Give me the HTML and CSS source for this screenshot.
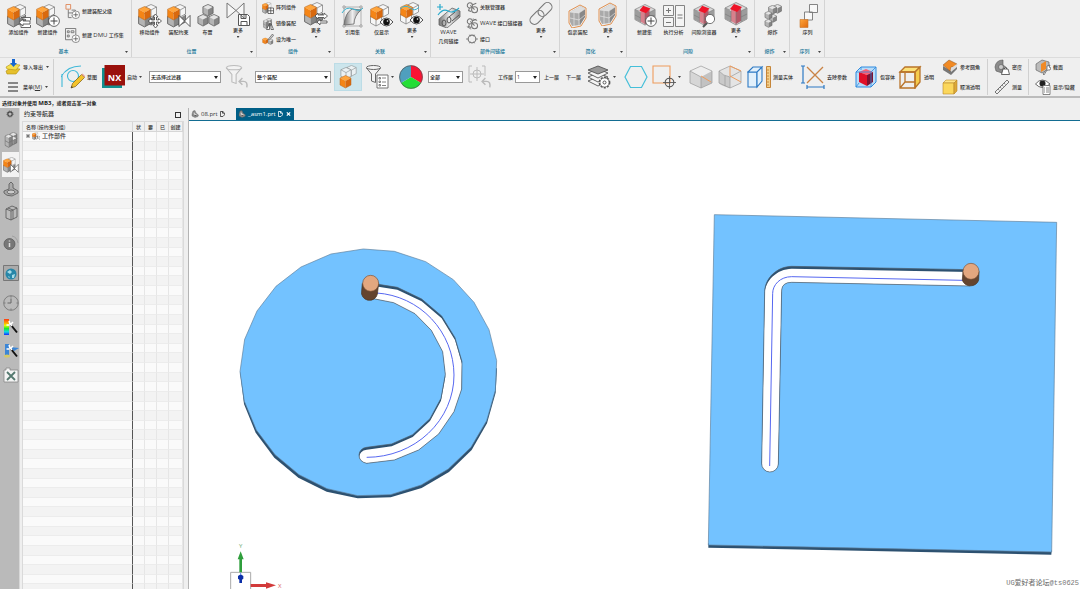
FILE: index.html
```html
<!DOCTYPE html>
<html lang="zh-CN">
<head>
<meta charset="utf-8">
<title>_asm1.prt - NX</title>
<link rel="stylesheet" href="styles.css">
</head>
<body>
<svg class="defs" aria-hidden="true">
  <defs>
    <linearGradient id="orange" x2="1" y2="1"><stop offset="0" stop-color="#ffa53a"/><stop offset="1" stop-color="#e0690c"/></linearGradient>
    <linearGradient id="metal" x2="1"><stop offset="0" stop-color="#777"/><stop offset=".5" stop-color="#eee"/><stop offset="1" stop-color="#888"/></linearGradient>
    <linearGradient id="rainbow" x2="0" y2="1"><stop offset="0" stop-color="#ff3a10"/><stop offset=".25" stop-color="#ffa800"/><stop offset=".4" stop-color="#e8ff00"/><stop offset=".6" stop-color="#18e830"/><stop offset=".8" stop-color="#10d8e8"/><stop offset="1" stop-color="#1828ff"/></linearGradient>
    <symbol id="cg" viewBox="0 0 12 14"><path fill="#e4e4e4" d="M6 .5 11.5 3 6 6 .5 3z"/><path fill="#b4b4b4" d="M.5 3 6 6v7L.5 10z"/><path fill="#858585" d="M11.500 3 6 6v7l5.500-3z"/><path fill="none" stroke="#5c5c5c" stroke-width=".8" d="M6 .5 11.500 3v7L6 13 .5 10V3z"/></symbol>
    <symbol id="cw" viewBox="0 0 12 14"><path fill="#f6f6f6" d="M6 .5 11.500 3v7L6 13 .5 10V3z"/><path fill="none" stroke="#777" stroke-width=".7" d="M6 .5 11.500 3v7L6 13 .5 10V3zM.5 3 6 6l5.500-3M6 6v7"/></symbol>
    <symbol id="co" viewBox="0 0 12 14"><path fill="#ffa53c" d="M6 .5 11.500 3 6 6 .5 3z"/><path fill="#f58516" d="M.5 3 6 6v7L.5 10z"/><path fill="#d9690e" d="M11.500 3 6 6v7l5.500-3z"/><path fill="none" stroke="#b8651c" stroke-width=".5" d="M6 .5 11.500 3v7L6 13 .5 10V3z"/></symbol>
    <symbol id="asm" viewBox="0 0 24 24"><use href="#cg" x="7" y="8" width="12" height="14"/><use href="#cg" x="0" y="9" width="13" height="15"/><use href="#cw" x="7" y="0" width="12" height="14"/><use href="#co" x="0" y="2" width="13" height="15"/></symbol>
    <symbol id="asmg" viewBox="0 0 24 24"><use href="#cg" x="9" y="0" width="13" height="14"/><use href="#cg" x="9" y="6" width="13" height="14"/><use href="#cg" x="2" y="10" width="13" height="14"/><use href="#cg" x="2" y="3" width="13" height="14"/></symbol>
    <symbol id="asmw" viewBox="0 0 24 24"><use href="#cw" x="7" y="0" width="12" height="14"/><use href="#cw" x="0" y="9" width="12" height="14"/><use href="#co" x="0" y="2" width="13" height="15"/></symbol>
    <symbol id="eye" viewBox="0 0 14 10"><path fill="#fff" stroke="#222" stroke-width=".8" d="M.5 5Q7-3 13.500 5 7 13 .5 5z"/><circle cx="7" cy="5" r="3.300" fill="#111"/><circle cx="8" cy="4" r=".8" fill="#fff"/></symbol>
    <symbol id="plus" viewBox="0 0 12 12"><circle cx="6" cy="6" r="5.400" fill="#fff" stroke="#444" stroke-width=".8"/><path stroke="#444" d="M6 2.500v7M2.500 6h7"/></symbol>
    <symbol id="bow" viewBox="0 0 14 14"><path fill="#fff" stroke="#444" stroke-width=".9" d="M1 1v12l6-6zM13 1v12L7 7z"/></symbol>
    <symbol id="redcube" viewBox="0 0 24 24"><path fill="#d8d8d8" stroke="#888" stroke-width=".8" d="M12 .5 23 6v11l-11 6L1 17V6z"/><path fill="#9c9c9c" d="M1 6l6 3v11l-6-3zM23 6l-6 3v11l6-3z"/><path fill="#d8808c" d="M7 6l5 3v13l-5-3z"/><path fill="#b65767" d="M17 6l-5 3v13l5-3z"/><path fill="#ee1428" d="M10 2l8 3-5 5-7-3z"/><path fill="none" stroke="#777" stroke-width=".6" d="M1 6l5 2M23 6l-6 3M12 10v13M1 12l6 3M23 12l-6 3M7 9v11M17 9v11"/></symbol>
    <symbol id="eyes" viewBox="0 0 24 24"><path fill="none" stroke="#e09050" stroke-width="1" d="M3 7 14 1l6 3v10l-5 8-9 2-3-5z"/><path fill="#aaa" d="M4 8 15 2l4 3v8l-5 8-8 1-2-4z"/><path fill="#ddd" d="M4 8 15 2l4 3-6 4z"/><path fill="#888" d="M13 9l6-4v8l-5 8z"/><path stroke="#eee" stroke-width=".6" fill="none" d="M4 14l9 2 6-5M8 9v13M13 9v12M4 8l9 1 6-4"/></symbol>
    <symbol id="link" viewBox="0 0 14 14"><g fill="none" stroke="#777" stroke-width="1.200"><circle cx="4.500" cy="4" r="3"/><circle cx="10" cy="9" r="3.500"/><path d="M7 3.500l5-2M4 7l-1 3 3 1M5 4l5 5"/></g></symbol>
    <symbol id="bracket" viewBox="0 0 16 16"><path fill="#8c8c8c" stroke="#555" stroke-width=".7" d="M2 8 4 2l4-1 2 5 5 4-1 3-6 2-6-3z"/><path fill="#ddd" stroke="#666" stroke-width=".5" d="M5 8l1-5 2 4 5 3-4 2z"/><ellipse cx="9" cy="11" rx="2" ry="1" fill="#555"/></symbol>
    <symbol id="undo" viewBox="0 0 10 10"><path fill="none" stroke="#bbb" stroke-width="1.300" d="M4 1 1 4l3 3M1 4h4q4 0 3 5.500"/></symbol>
    <symbol id="funnel" viewBox="0 0 16 18"><path fill="#f3f3f3" stroke-width="1" d="M1 3l5 6v7l4 1.500V9l5-6z"/><ellipse cx="8" cy="2.500" rx="7" ry="2" fill="#f3f3f3"/></symbol>
    <symbol id="target" viewBox="0 0 12 12"><g fill="none" stroke="#555"><circle cx="6" cy="6" r="4"/><path d="M6 0v12M0 6h12" stroke-width=".8"/></g></symbol>
    <symbol id="doc" viewBox="0 0 6 7"><path fill="none" stroke="currentColor" d="M.5.5h3l2 2v2l-2 2h-3zM3 .5v2h2"/></symbol>
    <symbol id="wand" viewBox="0 0 14 14"><path stroke="#111" stroke-width="2" d="M6 5l6 7.500"/><path stroke="#fff" stroke-width="1.500" d="M5 3.500l2 2.500M4 1l1 3M8 2 5.500 4.500M1.500 5l3 0"/></symbol>
  </defs>
</svg>

<header class="ribbon">
  <section class="group">
    <div class="tools">
      <button class="tool"><svg viewBox="0 0 24 24"><use href="#asm" width="24" height="24"/><path fill="#fff" stroke="#444" stroke-width=".8" d="M14 13.500h9.500v3M23.500 21v2.500H14v-3"/><path fill="#fff" stroke="#444" stroke-width=".8" d="M12 18.500l4-3.500v2h7v3h-7v2z"/></svg><span>添加组件</span></button>
      <button class="tool"><svg viewBox="0 0 24 24"><use href="#asm" width="24" height="24"/><use href="#plus" x="12" y="11" width="12" height="12"/></svg><span>新建组件</span></button>
      <div class="stack stack-two">
        <button class="row-tool"><svg class="mid" viewBox="0 0 16 16"><path fill="none" stroke="#e08a5c" d="M1 .5h5v5H1z"/><path fill="none" stroke="#777" d="M3.500 6v8.500H7M3.500 9.500H8M7 6.500h4v5M7 12.500h3"/><use href="#plus" x="7" y="7" width="9" height="9"/></svg><span>新建装配父级</span></button>
        <button class="row-tool"><svg class="mid" viewBox="0 0 16 16"><path fill="none" stroke="#777" d="M.5.500h11v12H.5zM2.500 3h2v2h-2zM6.500 3h3v2h-3zM2.500 7.500h2v2h-2z"/><use href="#plus" x="7" y="7" width="9" height="9"/></svg><span>新建 <span class="lat">DMU</span> 工作集</span></button>
      </div>
    </div>
    <h2 class="caption">基本<i class="caret"></i></h2>
  </section>
  <section class="group">
    <div class="tools">
      <button class="tool"><svg viewBox="0 0 24 24"><use href="#asm" width="24" height="24"/><path fill="#fff" stroke="#444" stroke-width=".8" d="M17.500 10l2.500 3h-1.500v3h2v-1.500L23.500 17l-3 2.500V18h-2v3H20l-2.500 3-2.500-3h1.500v-3h-3v1.500L10 17l3.500-2.500V16h3v-3H15z"/></svg><span>移动组件</span></button>
      <button class="tool"><svg viewBox="0 0 24 24"><use href="#asm" width="24" height="24"/><use href="#bow" x="11" y="10" width="13" height="14"/></svg><span>装配约束</span></button>
      <button class="tool"><svg viewBox="0 0 24 24"><use href="#cg" x="6" y="0" width="12" height="13"/><use href="#cg" x="1" y="10" width="12" height="13"/><use href="#cg" x="12" y="10" width="12" height="13"/></svg><span>布置</span></button>
      <button class="tool more"><svg viewBox="0 0 24 24"><path fill="#f6f6f6" stroke="#777" d="M1 1v15l9-7.500zM18 1v15l-8-7.500z"/><path fill="#fff" stroke="#555" d="M12.500 12.500h9l2 2v9h-11zM15 12.500v4h5v-4M15 23.500v-4h6v4"/></svg><span>更多</span><i class="caret"></i></button>
    </div>
    <h2 class="caption">位置<i class="caret"></i></h2>
  </section>
  <section class="group">
    <div class="tools">
      <div class="stack stack-short">
        <button class="row-tool"><svg viewBox="0 0 24 24"><use href="#asm" width="24" height="24"/><path fill="#fff" stroke="#444" stroke-width="1.500" d="M12 12h11v11H12zM17.500 12v11M12 17.500h11"/></svg><span>阵列组件</span></button>
        <button class="row-tool"><svg viewBox="0 0 24 24"><use href="#asmg" width="22" height="22"/><path fill="#fff" stroke="#444" stroke-width="1.500" d="M9 23l6-12v12zM23 23l-5-12v12z"/></svg><span>镜像装配</span></button>
        <button class="row-tool"><svg viewBox="0 0 24 24"><use href="#co" x="0" y="9" width="13" height="14"/><use href="#cg" x="11" y="11" width="12" height="13"/><path fill="#ccc" stroke="#666" stroke-width="1.500" d="M12 13l9-11 2 3-8 9z"/></svg><span>设为唯一</span></button>
      </div>
      <button class="tool more"><svg viewBox="0 0 24 24"><use href="#asm" width="24" height="24"/><path fill="#fff" stroke="#444" stroke-width=".8" d="M11 14l3-3v2h6v-2l3.500 3-3.500 3v-1.500h-6V17zM13 20l3-2.500V19h7v2h-7v2z"/></svg><span>更多</span><i class="caret"></i></button>
    </div>
    <h2 class="caption">组件<i class="caret"></i></h2>
  </section>
  <section class="group">
    <div class="tools">
      <button class="tool"><svg viewBox="0 0 24 24"><path fill="none" stroke="#999" stroke-width=".7" d="M3 3h17v19H3z"/><path fill="url(#metal)" stroke="#666" stroke-width=".8" d="M3 21Q4 9 11 5l9 1q-7 6-7 14z"/><path fill="none" stroke="#3ab3cf" d="M1 9Q5 2 12 5t10-1"/><path fill="#fff" stroke="#777" stroke-width=".6" d="M2 2h2v2H2zM19 2h2v2h-2zM2 21h2v2H2zM19 21h2v2h-2z"/></svg><span>引用集</span></button>
      <button class="tool"><svg viewBox="0 0 24 24"><use href="#asmw" width="24" height="24"/><use href="#eye" x="9" y="13" width="15" height="10"/></svg><span>仅显示</span></button>
      <button class="tool more"><svg viewBox="0 0 24 24"><use href="#asmw" width="24" height="24"/><path fill="none" stroke="#3ab3cf" d="M0 7q5-5 10-1t9-1"/><use href="#eye" x="9" y="13" width="15" height="10"/></svg><span>更多</span><i class="caret"></i></button>
    </div>
    <h2 class="caption">关联<i class="caret"></i></h2>
  </section>
  <section class="group">
    <div class="tools">
      <button class="tool"><svg viewBox="0 0 24 24"><path fill="url(#metal)" stroke="#666" stroke-width=".8" d="M2 15 15 4l8 3v6L10 24l-8-3z"/><g fill="none" stroke="#555"><ellipse cx="7" cy="19" rx="2" ry="3"/><ellipse cx="12" cy="16" rx="2" ry="3"/><path d="M12 13l6-5M15 17l7-6"/></g><path fill="none" stroke="#27a9cc" stroke-width="1.200" d="M3 0v6M0 3h6M1 11q5-7 10-4t11-3"/></svg><span><span class="lat">WAVE</span><br>几何链接</span></button>
      <div class="stack stack-long">
        <button class="row-tool"><svg viewBox="0 0 14 14"><use href="#link" width="14" height="14"/></svg><span>关联管理器</span></button>
        <button class="row-tool"><svg viewBox="0 0 14 14"><use href="#link" width="14" height="14"/><path stroke="#777" d="M1 10l5 3M8 1l5 2"/></svg><span><span class="lat">WAVE</span> 接口链接器</span></button>
        <button class="row-tool"><svg viewBox="0 0 14 14"><circle cx="7" cy="7" r="4.500" fill="none" stroke="#777" stroke-width="1.300"/><path stroke="#777" d="M0 7h3M11 7h3M4 2l1 2M10 2 9 4M4 12l1-2M10 12l-1-2"/></svg><span>接口</span></button>
      </div>
      <button class="tool more"><svg viewBox="0 0 24 24"><g fill="none" stroke="#777" stroke-width="1.100"><rect x="8" y="3" width="16" height="9" rx="4.500" transform="rotate(-45 16 7.500)"/><rect x="0" y="11" width="16" height="9" rx="4.500" transform="rotate(-45 8 15.500)"/></g></svg><span>更多</span><i class="caret"></i></button>
    </div>
    <h2 class="caption">部件间链接<i class="caret"></i></h2>
  </section>
  <section class="group">
    <div class="tools">
      <button class="tool"><svg viewBox="0 0 24 24"><use href="#eyes" width="24" height="24"/></svg><span>包裹装配</span></button>
      <button class="tool more"><svg viewBox="0 0 24 24"><use href="#eyes" width="24" height="24"/></svg><span>更多</span><i class="caret"></i></button>
    </div>
    <h2 class="caption">简化<i class="caret"></i></h2>
  </section>
  <section class="group">
    <div class="tools">
      <button class="tool"><svg viewBox="0 0 24 24"><use href="#redcube" width="24" height="22"/><use href="#plus" x="12" y="11" width="12" height="12"/></svg><span>新建集</span></button>
      <button class="tool"><svg viewBox="0 0 24 24"><path fill="#f4f4f4" stroke="#777" stroke-width=".9" d="M1.500 1.500h10v10h-10zM1.500 13.500h10v9h-10zM13.500 1.500h9v21h-9z"/><path stroke="#777" d="M4 6.500h5M6.500 4v5M4 18.500h5M15.500 11h5M15.500 14h5"/></svg><span>执行分析</span></button>
      <button class="tool wide"><svg viewBox="0 0 24 24"><use href="#redcube" width="24" height="22"/><path stroke="#555" stroke-width="2" d="M15 19l-4 4"/><circle cx="18" cy="15" r="4.600" fill="#fff" stroke="#555" stroke-width=".8"/></svg><span>间隙浏览器</span></button>
      <button class="tool more"><svg viewBox="0 0 24 24"><use href="#redcube" width="24" height="24"/></svg><span>更多</span><i class="caret"></i></button>
    </div>
    <h2 class="caption">间隙<i class="caret"></i></h2>
  </section>
  <section class="group">
    <div class="tools">
      <button class="tool"><svg viewBox="0 0 24 24"><use href="#cg" x="12" y="0" width="9" height="10"/><use href="#cg" x="7" y="1" width="9" height="10"/><use href="#cg" x="8" y="10" width="8" height="9"/><use href="#cg" x="3" y="7" width="9" height="9"/><use href="#cg" x="3" y="15" width="9" height="9"/></svg><span>爆炸</span></button>
    </div>
    <h2 class="caption">爆炸<i class="caret"></i></h2>
  </section>
  <section class="group">
    <div class="tools">
      <button class="tool"><svg viewBox="0 0 24 24"><path fill="#f8f8f8" stroke="#777" stroke-width=".9" d="M8.500 8h8v8h-8zM13.500.500h8v8h-8z"/><path fill="url(#orange)" stroke="#c8762e" stroke-width=".6" d="M4 15.500h8v8H4z"/></svg><span>序列</span></button>
    </div>
    <h2 class="caption">序列<i class="caret"></i></h2>
  </section>
</header>

<nav class="bar">
  <div class="pair first">
    <button class="row-tool"><svg class="mid" viewBox="0 0 16 16"><path fill="#e6c02c" stroke="#b08f10" stroke-width=".6" d="M1 12l5-3 9 1-4 5-9 0z"/><path fill="#f5e04e" stroke="#b08f10" stroke-width=".6" d="M1 8l5-3 9 1-4 5-9-1z"/><path fill="#1767d0" d="M7 0h3v4h2L8.500 8 5 4h2z"/></svg><span>导入导出</span><i class="caret"></i></button>
    <button class="row-tool"><svg class="mid" viewBox="0 0 16 16"><path stroke="#666" stroke-width="1.300" d="M3 4h10M3 8h10M3 12h10"/></svg><span>菜单<span class="lat">(<u>M</u>)</span></span><i class="caret"></i></button>
  </div>
  <button class="cell lead"><svg viewBox="0 0 24 24"><g fill="none" stroke="#3fb8d8" stroke-width="1.100"><path d="M1 22V9M0 12Q6 1 20 1"/><circle cx="12" cy="11" r="5.500"/></g><path fill="#f3c32a" stroke="#7b5a12" stroke-width=".7" d="M10 23l1.500-4.500 9-9 3 3-9 9z"/><path fill="#e8a090" d="M20.500 9.500l1-1 3 3-1 1z"/><path fill="#333" d="M10 23l.7-2 1.300 1.300z"/></svg><span>草图</span></button>
  <button class="cell"><svg viewBox="0 0 24 24"><path fill="#119090" d="M1 3h20v20H1z"/><path fill="#9a110c" d="M3.500 0H24v20.500H3.500z"/><text class="nx" x="13.500" y="16">NX</text></svg><span>启动</span><i class="caret"></i></button>
  <label class="combo combo-a"><select aria-label="选择过滤器"><option>无选择过滤器</option></select></label>
  <button class="cell" aria-label="重置过滤器"><svg viewBox="0 0 24 24"><g stroke="#bbb"><use href="#funnel" x="0" y="0" width="18" height="19"/></g><use href="#undo" x="13" y="12" width="11" height="11"/></svg></button>
  <label class="combo combo-b"><select aria-label="选择范围"><option>整个装配</option></select></label>
  <button class="cell on" aria-label="选择组件"><svg viewBox="0 0 24 24"><g opacity=".75"><use href="#cw" x="10" y="0" width="11" height="12"/><use href="#cw" x="4" y="2" width="12" height="13"/></g><use href="#co" x="3" y="10" width="13" height="14"/></svg></button>
  <button class="cell" aria-label="常规选择过滤器"><svg viewBox="0 0 24 24"><g stroke="#666"><use href="#funnel" x="0" y="0" width="17" height="18"/></g><path fill="#fff" stroke="#666" stroke-width=".9" d="M12 10h11v13H12z"/><path fill="none" stroke="#666" stroke-width=".8" d="M14 12.500h1.500v1.500H14zM14 16h1.500v1.500H14zM14 19.500h1.500V21H14zM17 13h4M17 17h4M17 20.500h4"/></svg><i class="caret"></i></button>
  <button class="cell" aria-label="颜色过滤器"><svg viewBox="0 0 24 24"><path fill="#fa1434" d="M12 12V.5A11.500 11.500 0 0 1 22 18z"/><path fill="#23de35" d="M12 12l10 6a11.500 11.500 0 0 1-20 0z"/><path fill="#4f9fbe" d="M12 12 2 18A11.500 11.500 0 0 1 12 .5z"/><circle cx="12" cy="12" r="11.400" fill="none" stroke="#555" stroke-width=".7"/></svg></button>
  <label class="combo combo-c"><select aria-label="图层过滤器"><option>全部</option></select></label>
  <button class="cell" aria-label="捕捉点"><svg viewBox="0 0 24 24"><g fill="none" stroke="#bbb"><path d="M4 1H1v16h3M14 1h3v10"/><circle cx="9" cy="9" r="4"/><path d="M9 2v14M2 9h14"/></g><use href="#undo" x="13" y="12" width="11" height="11"/></svg></button>
  <label class="combo combo-d"><span>工作层</span><select><option>1</option></select></label>
  <button class="cell"><span>上一层</span></button>
  <button class="cell"><span>下一层</span></button>
  <button class="cell" aria-label="图层设置"><svg viewBox="0 0 24 24"><g fill="#f5f5f5" stroke="#555" stroke-width=".9"><path d="M1 16l10-4 10 4-10 5z"/><path d="M1 12l10-4 10 4-10 5z"/><path d="M1 8l10-4 10 4-10 5z"/><path fill="#999" d="M1 5l10-4 10 4-10 4z"/></g><circle cx="17.500" cy="17.500" r="5" fill="#fff" stroke="#555" stroke-width="1.800" stroke-dasharray="2 1.200"/><circle cx="17.500" cy="17.500" r="4.500" fill="#fff" stroke="#555" stroke-width=".7"/><circle cx="17.500" cy="17.500" r="1.500" fill="none" stroke="#555"/></svg><i class="caret"></i></button>
  <button class="cell" aria-label="多边形"><svg viewBox="0 0 24 24"><path fill="none" stroke="#45bfd9" stroke-width="1.200" d="M1 12 6.500 1.500h11L23 12l-5.500 10.500h-11z"/></svg></button>
  <button class="cell" aria-label="矩形选择"><svg viewBox="0 0 24 24"><path fill="none" stroke="#ee9c5c" stroke-width="1.100" d="M1 1h17v17H1z"/><use href="#target" x="11" y="11" width="13" height="13"/></svg><i class="caret"></i></button>
  <button class="cell" aria-label="编辑对象"><svg viewBox="0 0 24 24"><path fill="#eee" d="M12 1 23 6 12 12 1 6z"/><path fill="#d6d6d6" d="M1 6l11 6v11L1 18z"/><path fill="#c2c2c2" d="M23 6l-11 6v11l11-5z"/><path fill="none" stroke="#999" stroke-width=".7" d="M12 1 23 6v12l-11 5-11-5V6zM1 6l11 6M12 23V12"/><path stroke="#ee9c5c" d="M12 11l10 6"/></svg></button>
  <button class="cell" aria-label="剖切对象"><svg viewBox="0 0 24 24"><path fill="#e4e4e4" d="M12 1 23 6v12l-11 5-11-5V6z"/><path fill="#c9c9c9" d="M1 6q4 5 11 6v11Q3 21 1 18z"/><path fill="none" stroke="#999" stroke-width=".7" d="M12 1 23 6v12l-11 5-11-5V6zM1 6q4 5 11 6l11-6M7 11v10M12 12v11"/><path fill="none" stroke="#ee9c5c" d="M23 6 12 1v10l11 6"/></svg></button>
  <button class="cell"><svg viewBox="0 0 24 24"><g fill="#e2f0fb" stroke="#2c79c4" stroke-width="1.100"><path d="M1 7h9v15H1z"/><path d="M1 7l5-5h9l-5 5zM10 7l5-5v14l-5 6z"/></g><path fill="#f3cf8a" stroke="#c07a2a" stroke-width=".9" d="M19.500 1.500h4v21h-4z"/><path stroke="#c07a2a" stroke-width=".8" d="M20 5h2M20 8h2M20 11h2M20 14h2M20 17h2M20 20h2"/></svg><span>测量实体</span></button>
  <button class="cell"><svg viewBox="0 0 24 24"><g fill="none" stroke="#2c79c4" stroke-width="1.200"><path d="M0 1h4M0 18h4M2 1v17M6 20v4M23 20v4M6 22h17"/></g><path stroke="#c98345" stroke-width="1.300" d="M6 2l16 16M22 2 6 18"/></svg><span>去除参数</span></button>
  <button class="cell"><svg viewBox="0 0 24 24"><path fill="#b9dcf8" stroke="#2f8be0" d="M2 7l5-5h15v15l-5 5H2z"/><path fill="#ff6070" d="M12 4l7 3-6 3-8-3z"/><path fill="#e01028" d="M5 7l8 3v11l-8-4z"/><path fill="#7e1230" d="M19 7l-6 3v11l6-4z"/><path fill="none" stroke="#2f8be0" stroke-width=".8" d="M2 7h15v15M17 7l5-5M7 2v3M2 22l3-4"/></svg><span>包容体</span></button>
  <button class="cell"><svg viewBox="0 0 24 24"><path fill="#fce178" stroke="#b9742a" stroke-width="1.300" d="M2 7l5-5h15l-5 5z"/><path fill="#f5cc4c" stroke="#b9742a" stroke-width="1.300" d="M17 7l5-5v15l-5 6z"/><path fill="none" stroke="#b9742a" stroke-width="1.300" d="M2 7h15v16H2zM7 8v9h10M7 17l-5 6"/></svg><span>透明</span></button>
  <div class="pair third">
    <button class="row-tool"><svg class="mid" viewBox="0 0 16 16"><path fill="#777" d="M1 7l8 5 6-6v4l-6 6-8-5z"/><path fill="#f08a25" stroke="#875020" stroke-width=".5" d="M1 6l6-5 8 4-2 3-4 0-1 4z"/><path fill="#ddd" d="M9 9l6-4v3l-6 5z"/></svg><span>参考圆角</span></button>
    <button class="row-tool"><svg class="mid" viewBox="0 0 16 16"><path fill="#ffe68a" stroke="#b9862a" stroke-width=".6" d="M1 4l3-3h11l-3 3z"/><path fill="#fbd75c" stroke="#b9862a" stroke-width=".6" d="M1 4h11v11H1z"/><path fill="#dca938" stroke="#b9862a" stroke-width=".6" d="M12 4l3-3v11l-3 3z"/></svg><span>取消透明</span></button>
  </div>
  <div class="pair">
    <button class="row-tool"><svg class="mid" viewBox="0 0 16 16"><path fill="#8c8c8c" stroke="#555" stroke-width=".6" d="M1 8Q2 1 9 1v5l4 3-5 5-6-2z"/><circle cx="7" cy="8" r="2.500" fill="#ccc" stroke="#555" stroke-width=".6"/><path fill="#fff" stroke="#444" stroke-width=".8" d="M9 10h5l1.500 5.500h-8zM10 10q1.500-3 3 0"/></svg><span>密度</span></button>
    <button class="row-tool"><svg class="mid" viewBox="0 0 16 16"><path fill="#eee" stroke="#666" stroke-width=".9" d="M1 13 13 1l2 2L3 15z"/><path stroke="#666" stroke-width=".7" d="M4 10l1.500 1.500M6 8l1.500 1.500M8 6l1.500 1.500M10 4l1.500 1.500"/></svg><span>测量</span></button>
  </div>
  <div class="pair">
    <button class="row-tool"><svg class="mid" viewBox="0 0 16 16"><path fill="#bbb" stroke="#555" stroke-width=".6" d="M1 5l6-4 7 2v7l-7 4-6-3z"/><path fill="#f08a25" d="M6 5l5-3v8l-5 3z"/><path fill="#fff" stroke="#555" stroke-width=".7" d="M8 15l4-5V7l3-1-1 2 2 1-1 2-3 0-3 5z"/></svg><span>截面</span></button>
    <button class="row-tool"><svg class="mid" viewBox="0 0 16 16"><path fill="#fff" stroke="#444" stroke-width=".8" d="M.5 5Q7-3 15 5 7 12 .5 5z"/><circle cx="7.500" cy="4.500" r="3" fill="#222"/><path fill="#fff" stroke="#555" stroke-width=".7" d="M8 6.500h7v9H8z"/><path stroke="#555" stroke-width=".7" d="M9 9h1M11 9h3M9 11h1M11 11h3M9 13h1M11 13h3"/></svg><span>显示/隐藏</span></button>
  </div>
</nav>

<p class="prompt">选择对象并使用 <span class="lat">MB3</span>，或者双击某一对象</p>

<div class="work">
  <nav class="rail" aria-label="资源条">
    <button aria-label="设置"><svg viewBox="0 0 16 16"><circle cx="8" cy="8" r="3.500" fill="none" stroke="#444" stroke-width="1.800"/><circle cx="8" cy="8" r="5" fill="none" stroke="#444" stroke-width="1.200" stroke-dasharray="1.500 2"/></svg></button>
    <button aria-label="装配导航器"><svg viewBox="0 0 24 24"><use href="#asmg" width="24" height="24"/></svg></button>
    <button class="on" aria-label="约束导航器"><svg viewBox="0 0 24 24"><use href="#asm" width="24" height="24"/><use href="#bow" x="10" y="10" width="14" height="14"/></svg></button>
    <button aria-label="部件导航器"><svg viewBox="0 0 16 16"><path fill="#aaa" stroke="#555" stroke-width=".8" d="M1 10l5-2V3l2-2 2 2v4l5 3v2l-6 3q-6 0-8-3z"/><ellipse cx="8" cy="11" rx="4" ry="2" fill="#ccc" stroke="#555" stroke-width=".8"/></svg></button>
    <button aria-label="重用库"><svg viewBox="0 0 16 16"><path fill="#bbb" stroke="#555" stroke-width=".8" d="M3 4l6-3 5 2v9l-6 3-5-2zM3 4l5 2 6-3M8 6v9M5 3l5 2v9"/></svg></button>
    <button class="gap" aria-label="信息"><svg viewBox="0 0 16 16"><circle cx="6.500" cy="9" r="5.500" fill="#777" stroke="#555" stroke-width=".7"/><path stroke="#ddd" stroke-width="1.500" d="M6.500 8v4M6.500 5.500v1"/><path fill="none" stroke="#999" stroke-width=".8" d="M9 1q5 1 6 7"/></svg></button>
    <button class="gap" aria-label="浏览器"><svg viewBox="0 0 16 16"><path fill="#aaa" stroke="#777" d="M.5.500h15v15H.5z"/><circle cx="8" cy="9" r="5.500" fill="#2786a8"/><path fill="#a8dce8" d="M4 7l3-2 2 2-2 2zM9 10l3-1-1 4-2 0zM5 11l2 1-1 1z"/></svg></button>
    <button class="gap" aria-label="历史记录"><svg viewBox="0 0 16 16"><circle cx="8" cy="8" r="7.300" fill="none" stroke="#777" stroke-width=".9"/><path fill="none" stroke="#666" d="M8 3.500V8H4.500"/><path stroke="#777" d="M8 1v1.500M8 13.500V15M1 8h1.500M13.500 8H15"/></svg></button>
    <button aria-label="系统材料"><svg viewBox="0 0 16 16"><path fill="url(#rainbow)" d="M1 0h5v16H1z"/><use href="#wand" x="2" y="1" width="14" height="14"/></svg></button>
    <button aria-label="加工向导"><svg viewBox="0 0 16 16"><path fill="#3c86d6" d="M2 1h4v12H2zM7 4l9 1-5 3z"/><ellipse cx="4" cy="13" rx="3" ry="1.500" fill="#d6c968"/><use href="#wand" x="2" y="1" width="14" height="14"/></svg></button>
    <button aria-label="角色"><svg viewBox="0 0 16 16"><path fill="#f4f4f4" stroke="#888" stroke-width=".8" d="M1 3h2V1h4v2h8v12H1z"/><path stroke="#54796f" stroke-width="1.800" d="M4 5l8 8M12 5l-8 8"/></svg></button>
  </nav>

  <aside class="panel">
    <h1 class="panel-title">约束导航器<button class="pin" aria-label="最大化"></button></h1>
    <div class="list">
      <table>
        <colgroup><col><col class="c-s"><col class="c-s"><col class="c-s"><col class="c-m"></colgroup>
        <thead><tr><th>名称 (按约束分组)</th><th>状</th><th>要</th><th>已</th><th>创建</th></tr></thead>
        <tbody id="rows"><tr><td><span class="node"><i class="expand"></i><svg viewBox="0 0 24 24"><use href="#asm" width="24" height="24"/><use href="#bow" x="11" y="11" width="13" height="13"/></svg>工作部件</span></td><td></td><td></td><td></td><td></td></tr></tbody>
      </table>
    </div>
  </aside>

  <main class="main">
    <div class="tabs">
      <a class="tab" href="#part"><svg class="part" viewBox="0 0 16 16"><use href="#bracket" width="16" height="16"/></svg>08.prt<svg class="doc" viewBox="0 0 6 7"><use href="#doc" width="6" height="7"/></svg></a>
      <a class="tab active" href="#asm1"><svg class="part" viewBox="0 0 16 16"><use href="#bracket" width="16" height="16"/></svg>_asm1.prt<svg class="doc" viewBox="0 0 6 7"><use href="#doc" width="6" height="7"/></svg><svg class="doc close" viewBox="0 0 6 6"><path stroke="currentColor" stroke-width="1.500" d="M1 1l4 4M5 1 1 5"/></svg></a>
    </div>
    <div class="canvas">
      <svg class="scene" viewBox="189 121 891 468" role="img" aria-label="装配模型">
        <defs>
          <path id="slot" d="M440 148 460 148 517 157 590 192 650 243 690 308 711 380 710 462 687 530 641 597 581 645 508 675 425 685Q402 680 402 660 404 640 425 637L500 627 563 599 615 551 648 490 661 418 653 350 619 286 570 236 506 203 440 190z"/>
          <path id="lslot" d="M825 209 290 199C245 200 210 235 209 275L200 790A25 25 0 0 0 250 792L260 270Q262 247 290 247L825 258z"/>
          <clipPath id="slot-clip"><use href="#slot"/></clipPath>
          <clipPath id="lslot-clip"><use href="#lslot"/></clipPath>
        </defs>
        <g transform="translate(225 235) scale(.33333)">
          <path class="edge" d="M45 410 57 507 92 593 148 668 220 728 305 770 398 790 497 787 590 759 672 711 740 645 786 565 812 473 816 400z"/>
          <path class="face" d="M415 42 508 49 602 80 685 134 747 202 792 284 815 377 811 466 785 557 738 637 670 702 589 750 497 779 398 782 306 761 222 719 150 659 94 585 58 499 45 410 59 313 96 228 153 154 228 96 318 57z"/>
          <use href="#slot" class="edge"/>
          <g clip-path="url(#slot-clip)"><use href="#slot" class="hole" y="7"/></g>
          <use href="#slot" class="line"/>
          <path class="curve" d="M455 174A248 248 0 0 1 687 420 262 247 0 0 1 425 667"/>
          <path class="pin-side" d="M412 145 410 168A24 23 0 0 0 457 178L461 145z"/>
          <circle class="pin-top" cx="437" cy="145" r="24"/>
        </g>
        <g transform="translate(695 200) scale(.33333)">
          <path class="edge" d="M40 1030 1070 1050 1069 1064 40 1043z"/>
          <path class="face" d="M58 44 1085 67 1070 1056 40 1035z"/>
          <use href="#lslot" class="edge"/>
          <g clip-path="url(#lslot-clip)"><use href="#lslot" class="hole" y="7"/></g>
          <use href="#lslot" class="line"/>
          <path class="curve" d="M803 241 290 230C255 230 233 255 233 280L224 798"/>
          <path class="pin-side" d="M804 214 802 240A25 22 0 0 0 851 240L852 214z"/>
          <circle class="pin-top" cx="828" cy="214" r="24"/>
        </g>
        <g transform="translate(200 530) scale(.33333)">
          <path fill="none" stroke="#aaa" stroke-width="3" d="M92 190V127h60v63"/>
          <path fill="#2f9e3c" d="M118 127V88h-5l9-24 9 24h-5v39z"/>
          <path fill="#d23a3a" d="M152 162h46v-5l30 9-30 10v-5h-46z"/>
          <path fill="#0c2fa8" d="M114 138l8-5 8 5v8l-4 3v10h-8v-10l-4-3z"/>
          <path stroke="#5a8cf0" stroke-width="3" d="M122 128v6"/>
          <text class="axis-y" x="117" y="54">Y</text>
          <text class="axis-x" x="234" y="173">X</text>
        </g>
      </svg>
      <span class="mark">UG爱好者论坛@ts0625</span>
    </div>
  </main>
</div>
<script src="rows.js"></script>
</body>
</html>
```
FILE: styles.css
```css
* { box-sizing: border-box; }

html, body { height: 100%; }

body {
  margin: 0;
  display: flex;
  flex-direction: column;
  overflow: hidden;
  background: #efefef;
  color: #333;
  font-family: "Open Sans", "Noto Sans CJK SC", sans-serif;
  font-size: 5px;
  font-weight: 500;
  line-height: 9px;
}

button, select {
  margin: 0;
  padding: 0;
  border: 0;
  background: none;
  color: inherit;
  font: inherit;
  white-space: nowrap;
}

h1, h2, p { margin: 0; font-size: inherit; font-weight: 500; }
svg { display: block; flex: none; }
.defs { position: absolute; width: 0; height: 0; }
.lat { font-size: 6px; }

.caret {
  display: block;
  flex: none;
  width: 3px;
  height: 2px;
  background: #444;
  clip-path: polygon(0 0, 100% 0, 50% 100%);
}

/* Ribbon */
.ribbon {
  display: flex;
  flex: none;
  padding-left: 1px;
  border-bottom: 1px solid #dcdcdc;
}

.group {
  display: flex;
  flex-direction: column;
  padding: 0 2px 0 3px;
  border-right: 1px solid #d4d4d4;
}

.tools { display: flex; height: 47px; }

.tool {
  display: flex;
  flex-direction: column;
  align-items: center;
  width: 29px;
  padding-top: 4px;
}

.tool svg { width: 24px; height: 24px; }
.tool span { line-height: 9px; }
.tool .lat { line-height: 8px; }
.tool.more { width: 32px; padding-top: 2px; }
.tool.more .caret { margin-top: 1px; }
.tool.wide { width: 32px; }

.caption {
  position: relative;
  height: 10px;
  color: #187698;
  text-align: center;
  padding-right: 6px;
}

.caption .caret {
  position: absolute;
  right: 1px;
  top: 4px;
}

.stack {
  display: flex;
  flex-direction: column;
  padding: 0 0 0 2px;
}

.stack-two { width: 67px; justify-content: space-around; padding-left: 3px; }
.stack-short { width: 40px; }
.stack-long { width: 62px; padding-left: 3px; }

.row-tool {
  display: flex;
  align-items: center;
  gap: 2px;
  height: 16px;
}

.row-tool svg { width: 12px; height: 12px; }
.row-tool svg.mid { width: 16px; height: 16px; }
.stack-two svg.mid { width: 15px; height: 15px; }

/* Selection bar */
.bar {
  display: grid;
  flex: none;
  grid-template-columns: 54px 47px 48px 76px 30px 79px 31px 34px 29px 40px 30px 46px 22px 21px 37px 28px 37px 29px 29px 54px 53px 44px 43px 47px 41px 1fr;
  align-items: center;
  height: 40px;
  border-bottom: 2px solid #bcbcbc;
}

.pair {
  display: flex;
  flex-direction: column;
  gap: 4px;
  padding-left: 6px;
  border-right: 1px solid #d0d0d0;
}

.pair:last-child { border-right: 0; }
.pair.third { padding-left: 1px; }
.pair .caret { margin-left: 1px; }
.pair.first { padding-left: 5px; }

.cell {
  display: flex;
  align-items: center;
  gap: 2px;
}

.cell.lead { padding-left: 7px; }
.cell svg { width: 24px; height: 24px; }

.cell.on {
  justify-content: center;
  width: 28px;
  height: 28px;
  background: #cce5ec;
  border: 1px solid #bcdce6;
}

.nx {
  fill: #fff;
  font: bold 9px "Open Sans", sans-serif;
  text-anchor: middle;
}

.combo {
  position: relative;
  display: flex;
  align-items: center;
  gap: 2px;
}

.combo select {
  flex: 1;
  appearance: none;
  height: 12px;
  padding: 0 1px;
  border: 1px solid #999;
  background: #fff;
  color: #222;
}

.combo::after {
  content: "";
  position: absolute;
  right: 3px;
  border: 2px solid transparent;
  border-top: 3px solid #222;
  border-bottom: 0;
}

.combo-a { width: 72px; }
.combo-b { width: 76px; }
.combo-c { width: 35px; }
.combo-d { width: 42px; }

.prompt {
  flex: none;
  height: 10px;
  padding-left: 2px;
  line-height: 10px;
  font-weight: bold;
  color: #222;
}

/* Work area */
.work {
  display: flex;
  flex: 1;
  min-height: 0;
}

.rail {
  display: flex;
  flex: none;
  flex-direction: column;
  width: 20px;
  background: #bababa;
  border-right: 1px solid #d8d8d8;
}

.rail button {
  display: flex;
  align-items: center;
  justify-content: center;
  height: 24px;
  margin-left: 2px;
}

.rail button:first-child { height: 12px; margin: 0 0 8px; }
.rail button:first-child svg { width: 10px; height: 10px; }
.rail .gap { margin: 6px 0 0 2px; }
.rail svg { width: 16px; height: 16px; }
.rail .on { height: 25px; background: #f3f3f3; }

.panel {
  display: flex;
  flex: none;
  flex-direction: column;
  width: 169px;
  padding: 0 4px 0 2px;
  border-right: 1px solid #b4b4b4;
}

.panel-title {
  display: flex;
  align-items: center;
  justify-content: space-between;
  height: 13px;
  padding: 0 3px 0 2px;
  font-size: 6px;
}

.pin { width: 6px; height: 6px; border: 1px solid #333; }

.list {
  flex: 1;
  min-height: 0;
  overflow: hidden;
  border: 1px solid #dadada;
  border-bottom: 0;
}

.list table {
  width: 100%;
  height: calc(100% + 5px);
  table-layout: fixed;
  border-collapse: separate;
  border-spacing: 0;
}

.c-s { width: 12px; }
.c-m { width: 14px; }

.list th, .list td {
  height: 9px;
  padding: 0;
  border-right: 1px solid #e6e6e6;
  border-bottom: 1px solid #ececec;
  overflow: hidden;
  white-space: nowrap;
  line-height: 8px;
}

.list thead, .list thead tr, .list th { height: 10px; }

.list th {
  font-weight: 500;
  background: #f0f0f0;
  border-color: #d6d6d6;
}

.list th:first-child { padding-left: 3px; text-align: left; }
.list td { background: #fafafa; }
.list tr:nth-child(even) td { background: #f3f3f3; }
.list td:first-child { border-right-color: #555; }

.node {
  display: flex;
  align-items: center;
  gap: 2px;
  height: 8px;
  padding-left: 3px;
  font-size: 6px;
}

.node svg { width: 8px; height: 8px; }

.expand {
  width: 4px;
  height: 4px;
  border: 1px solid #bbb;
  background: #777;
}

.main {
  display: flex;
  flex: 1;
  flex-direction: column;
  min-width: 0;
}

.tabs {
  display: flex;
  flex: none;
  gap: 6px;
  padding-left: 2px;
  border-bottom: 1px solid #136d92;
}

.tab {
  display: flex;
  align-items: center;
  gap: 2px;
  height: 12px;
  min-width: 39px;
  color: #333;
  font-size: 6px;
  text-decoration: none;
}

.tab.active {
  padding: 0 3px 0 2px;
  background: #005f87;
  color: #fff;
}

.tab .part { width: 8px; height: 8px; }
.tab .doc { width: 5px; height: 6px; }
.tab .close { margin-left: 1px; }

.canvas {
  position: relative;
  flex: 1;
  min-height: 0;
  background: #fff;
}

.scene { width: 100%; height: 100%; }
.edge { fill: #2d5170; }
.face { fill: #73c2ff; stroke: #5d7f9b; stroke-width: 2; }
.hole { fill: #fff; }
.line { fill: none; stroke: #4b5c6b; stroke-width: 2; }
.curve { fill: none; stroke: #5566f0; stroke-width: 3; }
.pin-side { fill: #64442f; stroke: #45301f; stroke-width: 2; }
.pin-top { fill: #e3a77f; stroke: #7a5238; stroke-width: 2; }
.axis-x { fill: #d86060; font: 18px "Open Sans", sans-serif; }
.axis-y { fill: #6aa870; font: 18px "Open Sans", sans-serif; }

.mark {
  position: absolute;
  right: 1px;
  bottom: 1px;
  color: #777;
  font-family: "Liberation Mono", "Noto Sans CJK SC", monospace;
  font-size: 7px;
}
```
FILE: rows.js
```js
const body = document.getElementById("rows");
for (let i = 0; i < 47; i++) {
  const row = body.insertRow();
  for (let c = 0; c < 5; c++) row.insertCell();
}
```
